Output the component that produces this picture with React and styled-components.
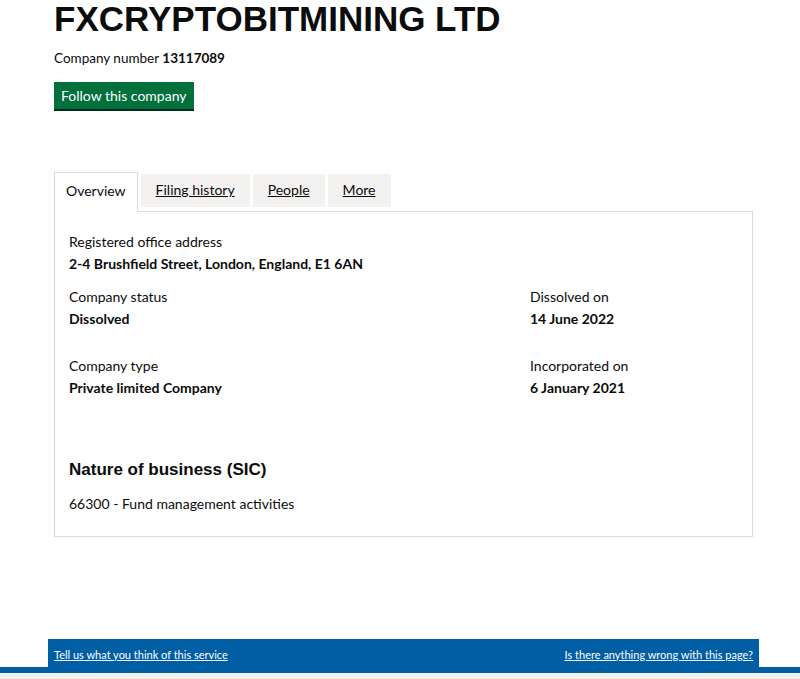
import React from 'react';
import styled, { createGlobalStyle } from 'styled-components';

const GlobalStyle = createGlobalStyle`
  html, body {
    margin: 0;
    padding: 0;
    background: #ffffff;
  }
  body {
    font-family: "Lato", "Liberation Sans", Arial, sans-serif;
    color: #0b0c0c;
  }
`;

const tabs = [
  { label: 'Overview', active: true },
  { label: 'Filing history' },
  { label: 'People' },
  { label: 'More' },
];

export default function App() {
  return (
    <Page>
      <GlobalStyle />
      <Main>
        <Title>FXCRYPTOBITMINING LTD</Title>
        <CompanyNumber>
          Company number <strong>13117089</strong>
        </CompanyNumber>
        <FollowButton>Follow this company</FollowButton>

        <TabList>
          {tabs.map(t => (
            <Tab key={t.label} $active={t.active}>
              {t.active ? t.label : <a href="#">{t.label}</a>}
            </Tab>
          ))}
        </TabList>

        <Panel>
          <Field>
            <Label>Registered office address</Label>
            <Value>2-4 Brushfield Street, London, England, E1 6AN</Value>
          </Field>

          <Grid>
            <Field>
              <Label>Company status</Label>
              <Value>Dissolved</Value>
            </Field>
            <Field>
              <Label>Dissolved on</Label>
              <Value>14 June 2022</Value>
            </Field>
            <Field>
              <Label>Company type</Label>
              <Value>Private limited Company</Value>
            </Field>
            <Field>
              <Label>Incorporated on</Label>
              <Value>6 January 2021</Value>
            </Field>
          </Grid>

          <SectionTitle>Nature of business (SIC)</SectionTitle>
          <SicLine>66300 - Fund management activities</SicLine>
        </Panel>
      </Main>

      <Footer>
        <FooterBar>
          <a href="#">Tell us what you think of this service</a>
          <a href="#">Is there anything wrong with this page?</a>
        </FooterBar>
        <FooterRule />
        <FooterBase />
      </Footer>
    </Page>
  );
}

const Page = styled.div`
  display: flex;
  flex-direction: column;
  min-height: 679px;
  background: #ffffff;
`;

const Main = styled.div`
  background: #ffffff;
  padding: 0 47px 0 54px;
  height: 639px;
  box-sizing: border-box;
`;

const Title = styled.h1`
  font-family: "Liberation Sans", Arial, sans-serif;
  font-weight: 700;
  font-size: 35px;
  line-height: 40px;
  margin: -1px 0 0;
`;

const CompanyNumber = styled.p`
  font-size: 13.5px;
  line-height: 20px;
  margin: 9px 0 0;

  strong {
    font-weight: 700;
  }
`;

const FollowButton = styled.button`
  display: block;
  margin-top: 14px;
  background: #00703c;
  color: #ffffff;
  border: 0;
  box-shadow: 0 2px 0 #002d18;
  font-family: inherit;
  font-size: 14px;
  line-height: 18px;
  padding: 5px 7px 4px;
  height: 27px;
  cursor: pointer;
`;

const TabList = styled.ul`
  display: flex;
  align-items: flex-end;
  gap: 3px;
  list-style: none;
  margin: 63px 0 0;
  padding: 0;
`;

const Tab = styled.li`
  box-sizing: border-box;
  font-size: 14px;
  line-height: 18px;
  padding: ${p => (p.$active ? '9px 11px 12px' : '7px 15px 8px')};
  background: ${p => (p.$active ? '#ffffff' : '#f3f2f1')};
  border: ${p => (p.$active ? '1px solid #dbdad9' : '0')};
  border-bottom: 0;
  margin-bottom: ${p => (p.$active ? '-1px' : '4px')};
  position: relative;
  z-index: ${p => (p.$active ? 1 : 0)};

  a {
    color: #0b0c0c;
    text-decoration: underline;
  }
`;

const Panel = styled.div`
  border: 1px solid #dbdad9;
  padding: 20px 14px 22px;
`;

const Field = styled.div`
  margin-bottom: 13px;
`;

const Grid = styled.div`
  display: grid;
  grid-template-columns: 461px 1fr;
  row-gap: 15px;

  & > div {
    margin-bottom: 12px;
  }
`;

const Label = styled.div`
  font-size: 14px;
  line-height: 20px;
`;

const Value = styled.div`
  font-size: 14px;
  line-height: 20px;
  font-weight: 700;
  margin-top: 2px;
`;

const SectionTitle = styled.h2`
  font-family: "Liberation Sans", Arial, sans-serif;
  font-size: 17px;
  line-height: 22px;
  font-weight: 700;
  margin: 49px 0 0;
`;

const SicLine = styled.p`
  font-size: 14px;
  line-height: 20px;
  margin: 13px 0 0;
`;

const Footer = styled.footer`
  background: #ffffff;
  flex: 1;
  display: flex;
  flex-direction: column;
`;

const FooterBar = styled.div`
  width: 711px;
  margin: 0 0 0 48px;
  height: 28px;
  box-sizing: border-box;
  background: #005ea5;
  display: flex;
  justify-content: space-between;
  align-items: center;
  padding: 2px 6px 0;

  a {
    color: #ffffff;
    font-size: 11px;
    text-decoration: underline;
  }
`;

const FooterRule = styled.div`
  height: 6px;
  background: #005ea5;
`;

const FooterBase = styled.div`
  flex: 1;
  background: #f3f2f1;
`;
